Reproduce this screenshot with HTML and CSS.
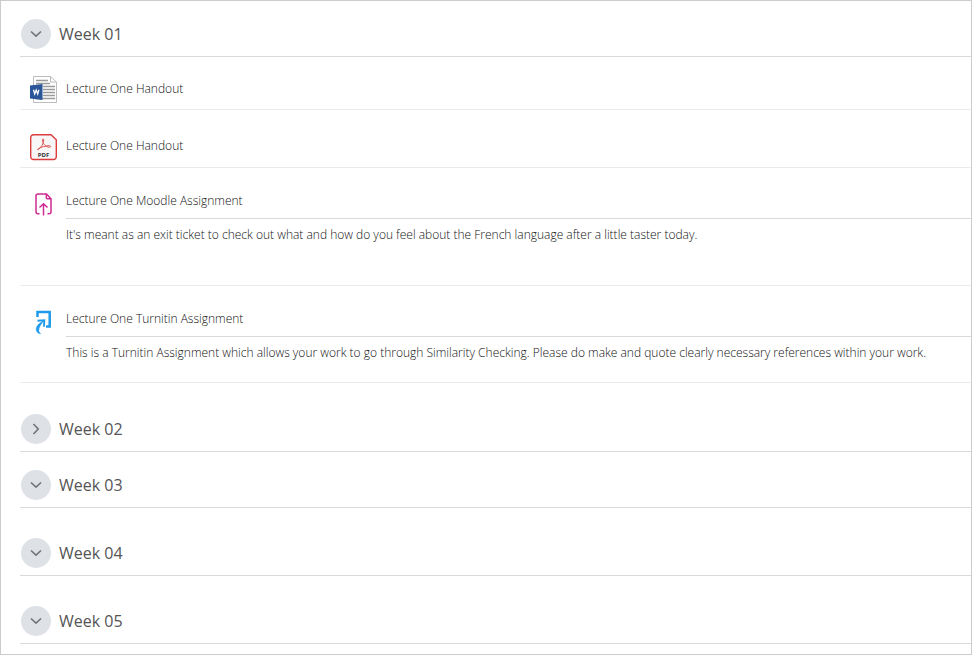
FILE: index.html
```html
<!DOCTYPE html>
<html lang="en">
<head>
    <meta charset="UTF-8">
    <meta name="viewport" content="width=device-width, initial-scale=1.0">
    <title>Course</title>
    <link rel="stylesheet" href="styles.css">
</head>
<body>
    <main class="course">
        <section class="week">
            <div class="week-header">
                <button type="button" class="toggle" aria-expanded="true" aria-label="Collapse Week 01">
                    <svg width="12" height="8" viewBox="0 0 12 8"><path d="M1 1.500l5 4.700 5-4.700"/></svg>
                </button>
                <h3>Week 01</h3>
            </div>
            <ul class="content">
                <li class="item">
                    <span class="icon">
                        <svg width="28" height="28" viewBox="0 0 28 28">
                            <path d="M3.500.5h17l6 5.500v20.500h-23z" fill="#fff" stroke="#bdbdbd"/>
                            <path d="M20.500.5V6h6" fill="none" stroke="#bdbdbd"/>
                            <path d="M6 4.500h12M6 7.500h14M13 10.500h12M13 13.500h12M13 16.500h12M13 19.500h12M6 22.500h19" stroke="#9a9a9a" stroke-width="1.300"/>
                            <path d="M0 9.500L12.500 8v16L0 22.500z" fill="#2a5599"/>
                            <path d="M3.500 13.800l1.200 4.200 1.500-4 1.500 4 1.200-4.200" fill="none" stroke="#fff" stroke-width="1.300"/>
                        </svg>
                    </span>
                    <a href="#" class="name">Lecture One Handout</a>
                </li>
                <li class="item">
                    <span class="icon">
                        <svg width="28" height="28" viewBox="0 -1 28 28">
                            <path d="M3.500.7H21l5.300 5v17a2.800 2.800 0 0 1-2.800 2.800h-20a2.800 2.800 0 0 1-2.800-2.800V3.500A2.800 2.800 0 0 1 3.500.7z" fill="#f8f6f6" stroke="#dc3c3c" stroke-width="1.400"/>
                            <path d="M8 15.500c2.500-1 6-6.500 5.700-9.500-.2-1.800-1.600-1.200-1.200.8.700 3.500 4 6.500 7 6.400 1.800-.1 1.500-1.500-.5-1.500-3 0-7.500 1.200-10.300 2.800-1.200.8-1.500 1.400-.7 1z" fill="none" stroke="#e05252" stroke-width="1"/>
                            <text x="13.500" y="22.500" class="pdf-label">PDF</text>
                        </svg>
                    </span>
                    <a href="#" class="name">Lecture One Handout</a>
                </li>
                <li class="item">
                    <span class="icon">
                        <svg width="18" height="24" viewBox="0 0 18 24" fill="none" stroke="#cf2a93" stroke-width="1.500">
                            <path d="M4.500 20.700H3a2 2 0 0 1-2-2V3a2 2 0 0 1 2-2h8.500l4.500 4.700v13a2 2 0 0 1-2 2h-1.500"/>
                            <path d="M11.300 1v3.700a1 1 0 0 0 1 1H16M8.500 22.500V11.500M4.500 14.500l4-3.800 4 3.800"/>
                        </svg>
                    </span>
                    <div class="details">
                        <a href="#" class="name">Lecture One Moodle Assignment</a>
                        <p class="description long">It's meant as an exit ticket to check out what and how do you feel about the French language after a little taster today.</p>
                    </div>
                </li>
                <li class="item">
                    <span class="icon">
                        <svg width="18" height="26" viewBox="0 0 18 26" fill="none" stroke="#1f9bea">
                            <path d="M2.500 7V2h12.200v14.500H11" stroke-width="2.500"/>
                            <path d="M2.500 10.700l6.800-.5-.3 6.500" stroke-width="1.900"/>
                            <path d="M9 10.800C3.500 13 .7 17 1.300 20.200c.4 2 2 3.300 4.300 3.500-1.800-1.500-2.200-3-1.600-5C4.600 16 6.500 13.500 9 10.800z" fill="#1f9bea" stroke-width=".5"/>
                        </svg>
                    </span>
                    <div class="details">
                        <a href="#" class="name">Lecture One Turnitin Assignment</a>
                        <p class="description">This is a Turnitin Assignment which allows your work to go through Similarity Checking. Please do make and quote clearly necessary references within your work.</p>
                    </div>
                </li>
            </ul>
        </section>
        <section class="week">
            <div class="week-header">
                <button type="button" class="toggle" aria-expanded="false" aria-label="Expand Week 02">
                    <svg width="8" height="12" viewBox="0 0 8 12"><path d="M1.500 1l4.700 5-4.700 5"/></svg>
                </button>
                <h3>Week 02</h3>
            </div>
        </section>
        <section class="week">
            <div class="week-header">
                <button type="button" class="toggle" aria-expanded="true" aria-label="Collapse Week 03">
                    <svg width="12" height="8" viewBox="0 0 12 8"><path d="M1 1.500l5 4.700 5-4.700"/></svg>
                </button>
                <h3>Week 03</h3>
            </div>
            <ul class="content"></ul>
        </section>
        <section class="week">
            <div class="week-header">
                <button type="button" class="toggle" aria-expanded="true" aria-label="Collapse Week 04">
                    <svg width="12" height="8" viewBox="0 0 12 8"><path d="M1 1.500l5 4.700 5-4.700"/></svg>
                </button>
                <h3>Week 04</h3>
            </div>
            <ul class="content"></ul>
        </section>
        <section class="week">
            <div class="week-header">
                <button type="button" class="toggle" aria-expanded="true" aria-label="Collapse Week 05">
                    <svg width="12" height="8" viewBox="0 0 12 8"><path d="M1 1.500l5 4.700 5-4.700"/></svg>
                </button>
                <h3>Week 05</h3>
            </div>
            <ul class="content"></ul>
        </section>
    </main>
</body>
</html>
```

FILE: styles.css
```css
* {
    box-sizing: border-box;
}
body {
    font-family: "Open Sans", "Noto Sans", sans-serif;
    font-size: 12px;
    font-weight: 300;
    line-height: 20px;
    background-color: white;
    color: #111111;
    margin: 0;
}
.course {
    border: 1px solid #cccccc;
    padding-left: 19px;
}
.week-header {
    display: flex;
    align-items: center;
    gap: 8px;
    padding: 18px 0 7px 1px;
    border-bottom: 1px solid #d9d9d9;
}
.week-header h3 {
    margin: 0;
    font-size: 16px;
    font-weight: normal;
    line-height: 30px;
    color: #555555;
}
.toggle {
    display: flex;
    justify-content: center;
    align-items: center;
    width: 30px;
    height: 30px;
    padding: 0;
    border: none;
    border-radius: 50%;
    background-color: #dee2e6;
    cursor: pointer;
}
.toggle:hover {
    background-color: #ced4da;
}
.toggle path {
    fill: none;
    stroke: #75757a;
    stroke-width: 1.7;
}
.content {
    list-style: none;
    margin: 0;
    padding: 0 0 13px;
}
.content:empty {
    padding-bottom: 12px;
}
.week:last-child .content {
    padding-bottom: 10px;
}
.item {
    display: flex;
    gap: 8px;
    padding: 23px 0 6px 10px;
    border-bottom: 1px solid #ebebeb;
}
.item:first-child {
    padding-top: 19px;
    padding-bottom: 5px;
}
.icon {
    display: flex;
    justify-content: center;
    align-items: center;
    flex: none;
    width: 28px;
    height: 28px;
}
.name {
    color: #111111;
    text-decoration: none;
    line-height: 26px;
}
.name:hover {
    text-decoration: underline;
}
.details {
    flex: 1;
}
.details .name {
    display: block;
    line-height: 20px;
    padding-bottom: 7px;
    border-bottom: 1px solid #d9d9d9;
}
.description {
    margin: 0;
    padding: 6px 0 13px;
}
.description.long {
    padding-bottom: 34px;
}
.pdf-label {
    font-size: 6px;
    font-weight: bold;
    text-anchor: middle;
    fill: #333333;
}
```
